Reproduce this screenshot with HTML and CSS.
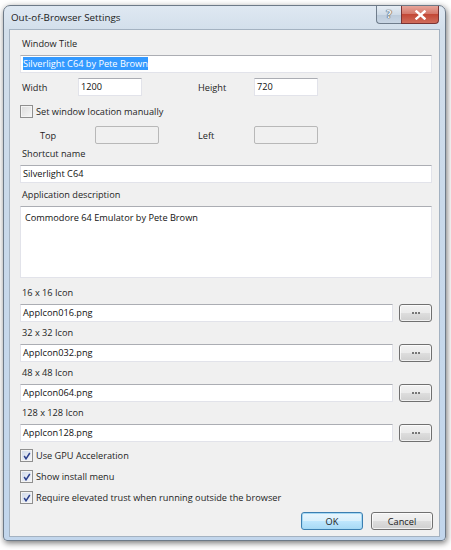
FILE: index.html
```html
<!DOCTYPE html>
<html>
<head>
<meta charset="utf-8">
<link rel="stylesheet" href="styles.css">
</head>
<body>
<div class="window">
  <div class="titlebar">
    <span class="title">Out-of-Browser Settings</span>
    <div class="caption-btns">
      <div class="cbtn help">?</div>
      <div class="cbtn close">
        <svg width="13" height="10" viewBox="0 0 13 10"><path d="M2.5 1.5 L10.5 8.5 M10.5 1.5 L2.5 8.5" stroke="#fff" stroke-width="2.4" stroke-linecap="square"/></svg>
      </div>
    </div>
  </div>
  <div class="client">
    <div class="label">Window Title</div>
    <div class="input full"><span class="sel">Silverlight C64 by Pete Brown</span></div>
    <div class="row dims">
      <span class="lab w56">Width</span>
      <div class="input small">1200</div>
      <span class="lab w56 ml54">Height</span>
      <div class="input small">720</div>
    </div>
    <div class="check-row crow1">
      <span class="cb"></span><span>Set window location manually</span>
    </div>
    <div class="row pos">
      <span class="lab indent w55">Top</span>
      <div class="input small disabled"></div>
      <span class="lab w56 ml37">Left</span>
      <div class="input small disabled"></div>
    </div>
    <div class="label">Shortcut name</div>
    <div class="input full">Silverlight C64</div>
    <div class="label">Application description</div>
    <div class="textarea">Commodore 64 Emulator by Pete Brown</div>
    <div class="label">16 x 16 Icon</div>
    <div class="icon-row"><div class="input grow">AppIcon016.png</div><div class="btn dots"><i></i><i></i><i></i></div></div>
    <div class="label">32 x 32 Icon</div>
    <div class="icon-row"><div class="input grow">AppIcon032.png</div><div class="btn dots"><i></i><i></i><i></i></div></div>
    <div class="label">48 x 48 Icon</div>
    <div class="icon-row"><div class="input grow">AppIcon064.png</div><div class="btn dots"><i></i><i></i><i></i></div></div>
    <div class="label">128 x 128 Icon</div>
    <div class="icon-row"><div class="input grow">AppIcon128.png</div><div class="btn dots"><i></i><i></i><i></i></div></div>
    <div class="checks">
      <div class="check-row"><span class="cb on"><svg width="8" height="8" viewBox="0 0 8 8"><path d="M1.2 4 L3 6.8 L6.8 1" stroke="#2a3f8c" stroke-width="1.5" fill="none"/></svg></span><span>Use GPU Acceleration</span></div>
      <div class="check-row"><span class="cb on"><svg width="8" height="8" viewBox="0 0 8 8"><path d="M1.2 4 L3 6.8 L6.8 1" stroke="#2a3f8c" stroke-width="1.5" fill="none"/></svg></span><span>Show install menu</span></div>
      <div class="check-row"><span class="cb on"><svg width="8" height="8" viewBox="0 0 8 8"><path d="M1.2 4 L3 6.8 L6.8 1" stroke="#2a3f8c" stroke-width="1.5" fill="none"/></svg></span><span>Require elevated trust when running outside the browser</span></div>
    </div>
    <div class="buttons">
      <div class="btn default">OK</div>
      <div class="btn">Cancel</div>
    </div>
  </div>
</div>
</body>
</html>
```

FILE: styles.css
```css
html, body {
  margin: 0;
  padding: 0;
  background: #ffffff;
}
body {
  width: 451px;
  height: 550px;
  overflow: hidden;
  font-family: "Open Sans", "Noto Sans", sans-serif;
  font-size: 9.2px;
  color: #1e1e1e;
}
.window {
  box-sizing: border-box;
  margin: 5px 0 0 3px;
  width: 443px;
  height: 536px;
  border: 1px solid #6d7a88;
  border-radius: 7px 7px 4px 4px;
  background: linear-gradient(180deg, #dfe8f2 0px, #d3dfeb 24px, #c9d9ea 200px, #c2d6ec 100%);
  box-shadow: 1px 2px 6px rgba(0,0,0,0.55);
  display: flex;
  flex-direction: column;
}
.titlebar {
  height: 23px;
  display: flex;
  align-items: flex-start;
  padding-left: 7px;
  position: relative;
}
.title {
  font-size: 9.8px;
  line-height: 22px;
  color: #1a1a1a;
  margin-top: 1px;
}
.caption-btns {
  margin-left: auto;
  margin-right: 6px;
  display: flex;
}
.cbtn {
  box-sizing: border-box;
  height: 18px;
  border: 1px solid #6f7d8c;
  border-top: none;
  display: flex;
  align-items: center;
  justify-content: center;
}
.help {
  width: 25px;
  border-radius: 0 0 0 4px;
  border-right: none;
  background: linear-gradient(180deg, #e6edf4 0%, #cfdbe7 50%, #bccbdb 51%, #c9d6e4 100%);
  font-family: "DejaVu Sans", sans-serif;
  font-weight: bold;
  font-size: 11px;
  color: #e9eef4;
  text-shadow: 0 0 1px #333, 0 0 1px #333;
}
.close {
  width: 38px;
  border-radius: 0 0 4px 0;
  border-color: #7a3434;
  background: linear-gradient(180deg, #e7a59a 0%, #d5786a 45%, #c34836 50%, #d06d5c 100%);
}
.client {
  flex: 1;
  margin: 0 5px 3px 5px;
  border: 1px solid #a4b2c1;
  background: #f0f0f0;
  padding: 7px 6px 0 10px;
  display: flex;
  flex-direction: column;
}
.label {
  height: 14px;
  line-height: 14px;
  padding-left: 2px;
  margin-bottom: 4px;
  white-space: nowrap;
}
.input {
  box-sizing: border-box;
  height: 18px;
  background: #ffffff;
  border: 1px solid #e2e3ea;
  border-top-color: #abadb3;
  padding: 0 2px;
  line-height: 16px;
  white-space: nowrap;
  overflow: hidden;
  color: #111;
}
.input.full {
  width: 412px;
  margin-bottom: 5px;
}
.sel {
  background: #3399ff;
  color: #ffffff;
  display: inline-block;
  line-height: 13px;
}
.row {
  display: flex;
  align-items: center;
  height: 18px;
}
.lab {
  padding-left: 2px;
  box-sizing: border-box;
  flex: none;
}
.w56 { width: 58px; }
.w55 { width: 75px; }
.ml54 { margin-left: 54px; }
.ml37 { margin-left: 37px; }
.indent { padding-left: 20px; }
.input.small {
  width: 64px;
  flex: none;
}
.input.disabled {
  background: #f0f0f0;
  border: 1px solid #b8b8b8;
  border-radius: 2px;
}
.check-row {
  display: flex;
  align-items: center;
  height: 21px;
  white-space: nowrap;
}
.crow1 {
  height: 20px;
  margin-top: 5px;
  margin-bottom: 5px;
}
.pos {
  margin-bottom: 3px;
}
.cb {
  box-sizing: border-box;
  width: 13px;
  height: 13px;
  border: 1px solid #8f8f8f;
  background: linear-gradient(135deg, #dcdcdc 0%, #f6f6f6 100%);
  box-shadow: inset 0 0 0 1px #f4f4f4;
  margin-right: 3px;
  flex: none;
  display: flex;
  align-items: center;
  justify-content: center;
}
.cb.on {
  background: linear-gradient(135deg, #cfd9ea 0%, #f4f6fb 100%);
}
.textarea {
  box-sizing: border-box;
  width: 412px;
  height: 72px;
  background: #ffffff;
  border: 1px solid #e2e3ea;
  border-top-color: #abadb3;
  padding: 4px 4px;
  margin-bottom: 8px;
  color: #111;
}
.icon-row {
  display: flex;
  align-items: center;
  height: 18px;
  margin-bottom: 4px;
}
.input.grow {
  width: 373px;
  flex: none;
}
.btn {
  box-sizing: border-box;
  height: 18px;
  border: 1px solid #707070;
  border-radius: 3px;
  background: linear-gradient(180deg, #f2f2f2 0%, #ebebeb 48%, #dddddd 52%, #cfcfcf 100%);
  box-shadow: inset 0 0 0 1px rgba(255,255,255,0.7);
  display: flex;
  align-items: center;
  justify-content: center;
  color: #1a1a1a;
}
.btn.dots {
  width: 33px;
  margin-left: 6px;
  gap: 1px;
}
.btn.dots i {
  width: 2px;
  height: 2px;
  background: #777;
}
.checks {
  margin-top: -1px;
  display: flex;
  flex-direction: column;
}
.buttons {
  display: flex;
  justify-content: flex-end;
  gap: 8px;
  margin-top: 4px;
}
.buttons .btn {
  width: 62px;
}
.btn.default {
  border-color: #3c7fb1;
  box-shadow: inset 0 0 0 1px #a6d9f4;
  background: linear-gradient(180deg, #eaf6fd 0%, #d9f0fc 48%, #bee6fd 52%, #a7d9f5 100%);
}
```
